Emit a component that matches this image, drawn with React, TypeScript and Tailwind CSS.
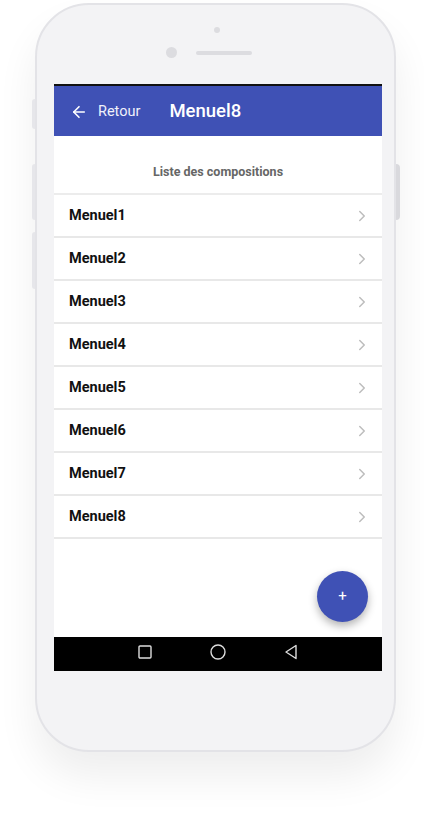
import { ArrowLeft, ChevronRight } from "lucide-react"

const items = ["Menuel1", "Menuel2", "Menuel3", "Menuel4", "Menuel5", "Menuel6", "Menuel7", "Menuel8"]

export default function App() {
  return (
    <div className="w-[424px] h-[825px] bg-white overflow-hidden" style={{ fontFamily: "Roboto, 'Liberation Sans', sans-serif" }}>
      <div className="relative ml-[35px] mt-[3px] w-[361px] h-[749px] rounded-[54px] border-2 border-[#e3e3e7] bg-[#f3f3f5] shadow-[0_24px_40px_rgba(0,0,0,0.07)]">
        {/* side buttons */}
        <div className="absolute left-[-5px] top-[94px] w-[3px] h-[30px] rounded-l bg-[#e6e6ea]" />
        <div className="absolute left-[-5px] top-[159px] w-[3px] h-[56px] rounded-l bg-[#e6e6ea]" />
        <div className="absolute left-[-5px] top-[227px] w-[3px] h-[57px] rounded-l bg-[#e6e6ea]" />
        <div className="absolute right-[-6px] top-[159px] w-[4px] h-[56px] rounded-r bg-[#d9d9dd]" />

        {/* top bezel */}
        <div className="h-[79px] flex flex-col items-center">
          <div className="mt-[22px] ml-[3px] w-[6px] h-[6px] rounded-full bg-[#dcdce0]" />
          <div className="mt-[14px] flex items-center gap-[19px] -ml-[13px]">
            <div className="w-[11px] h-[11px] rounded-full bg-[#dcdce0]" />
            <div className="w-[56px] h-[4px] rounded-full bg-[#dcdce0]" />
          </div>
        </div>

        {/* screen */}
        <div className="ml-[17px] w-[328px] h-[587px] bg-white flex flex-col">
          <div className="h-[2px] bg-[#111]" />
          <div className="h-[50px] bg-[#3f51b5] flex items-center text-white pt-[1px]">
            <ArrowLeft className="ml-[16px] w-[18px] h-[18px]" strokeWidth={2.2} />
            <span className="ml-[10px] text-[14.5px] text-[#f0f2fa]">Retour</span>
            <span className="ml-[29px] text-[18.5px] font-medium">Menuel8</span>
          </div>
          <div className="h-[59px] flex items-center justify-center pt-[16px] border-b-2 border-[#ececec]">
            <span className="text-[12.5px] font-bold text-[#666]">Liste des compositions</span>
          </div>
          {items.map((item) => (
            <div key={item} className="h-[43px] flex items-center justify-between border-b-2 border-[#e8e8e8] pl-[15px] pr-[11px]">
              <span className="text-[14.5px] font-bold text-[#111]">{item}</span>
              <ChevronRight className="w-[18px] h-[18px] text-[#bdbdbd]" strokeWidth={2} />
            </div>
          ))}
          <div className="flex-1 relative">
            <div className="absolute right-[14px] bottom-[15px] w-[51px] h-[51px] rounded-full bg-[#3f51b5] shadow-[0_4px_8px_rgba(0,0,0,0.3)] flex items-center justify-center text-white text-[15px]">
              +
            </div>
          </div>
          <div className="h-[34px] bg-black flex items-center justify-center gap-[55px] pb-[4px]">
            <svg width="18" height="18" viewBox="0 0 18 18"><rect x="3" y="3" width="12" height="12" rx="1" fill="none" stroke="#ddd" strokeWidth="1.4" /></svg>
            <svg width="18" height="18" viewBox="0 0 18 18"><circle cx="9" cy="9" r="7" fill="none" stroke="#ddd" strokeWidth="1.4" /></svg>
            <svg width="18" height="18" viewBox="0 0 18 18"><path d="M14 2.5 L4 9 L14 15.5 Z" fill="none" stroke="#ddd" strokeWidth="1.4" strokeLinejoin="round" /></svg>
          </div>
        </div>
      </div>
    </div>
  )
}
